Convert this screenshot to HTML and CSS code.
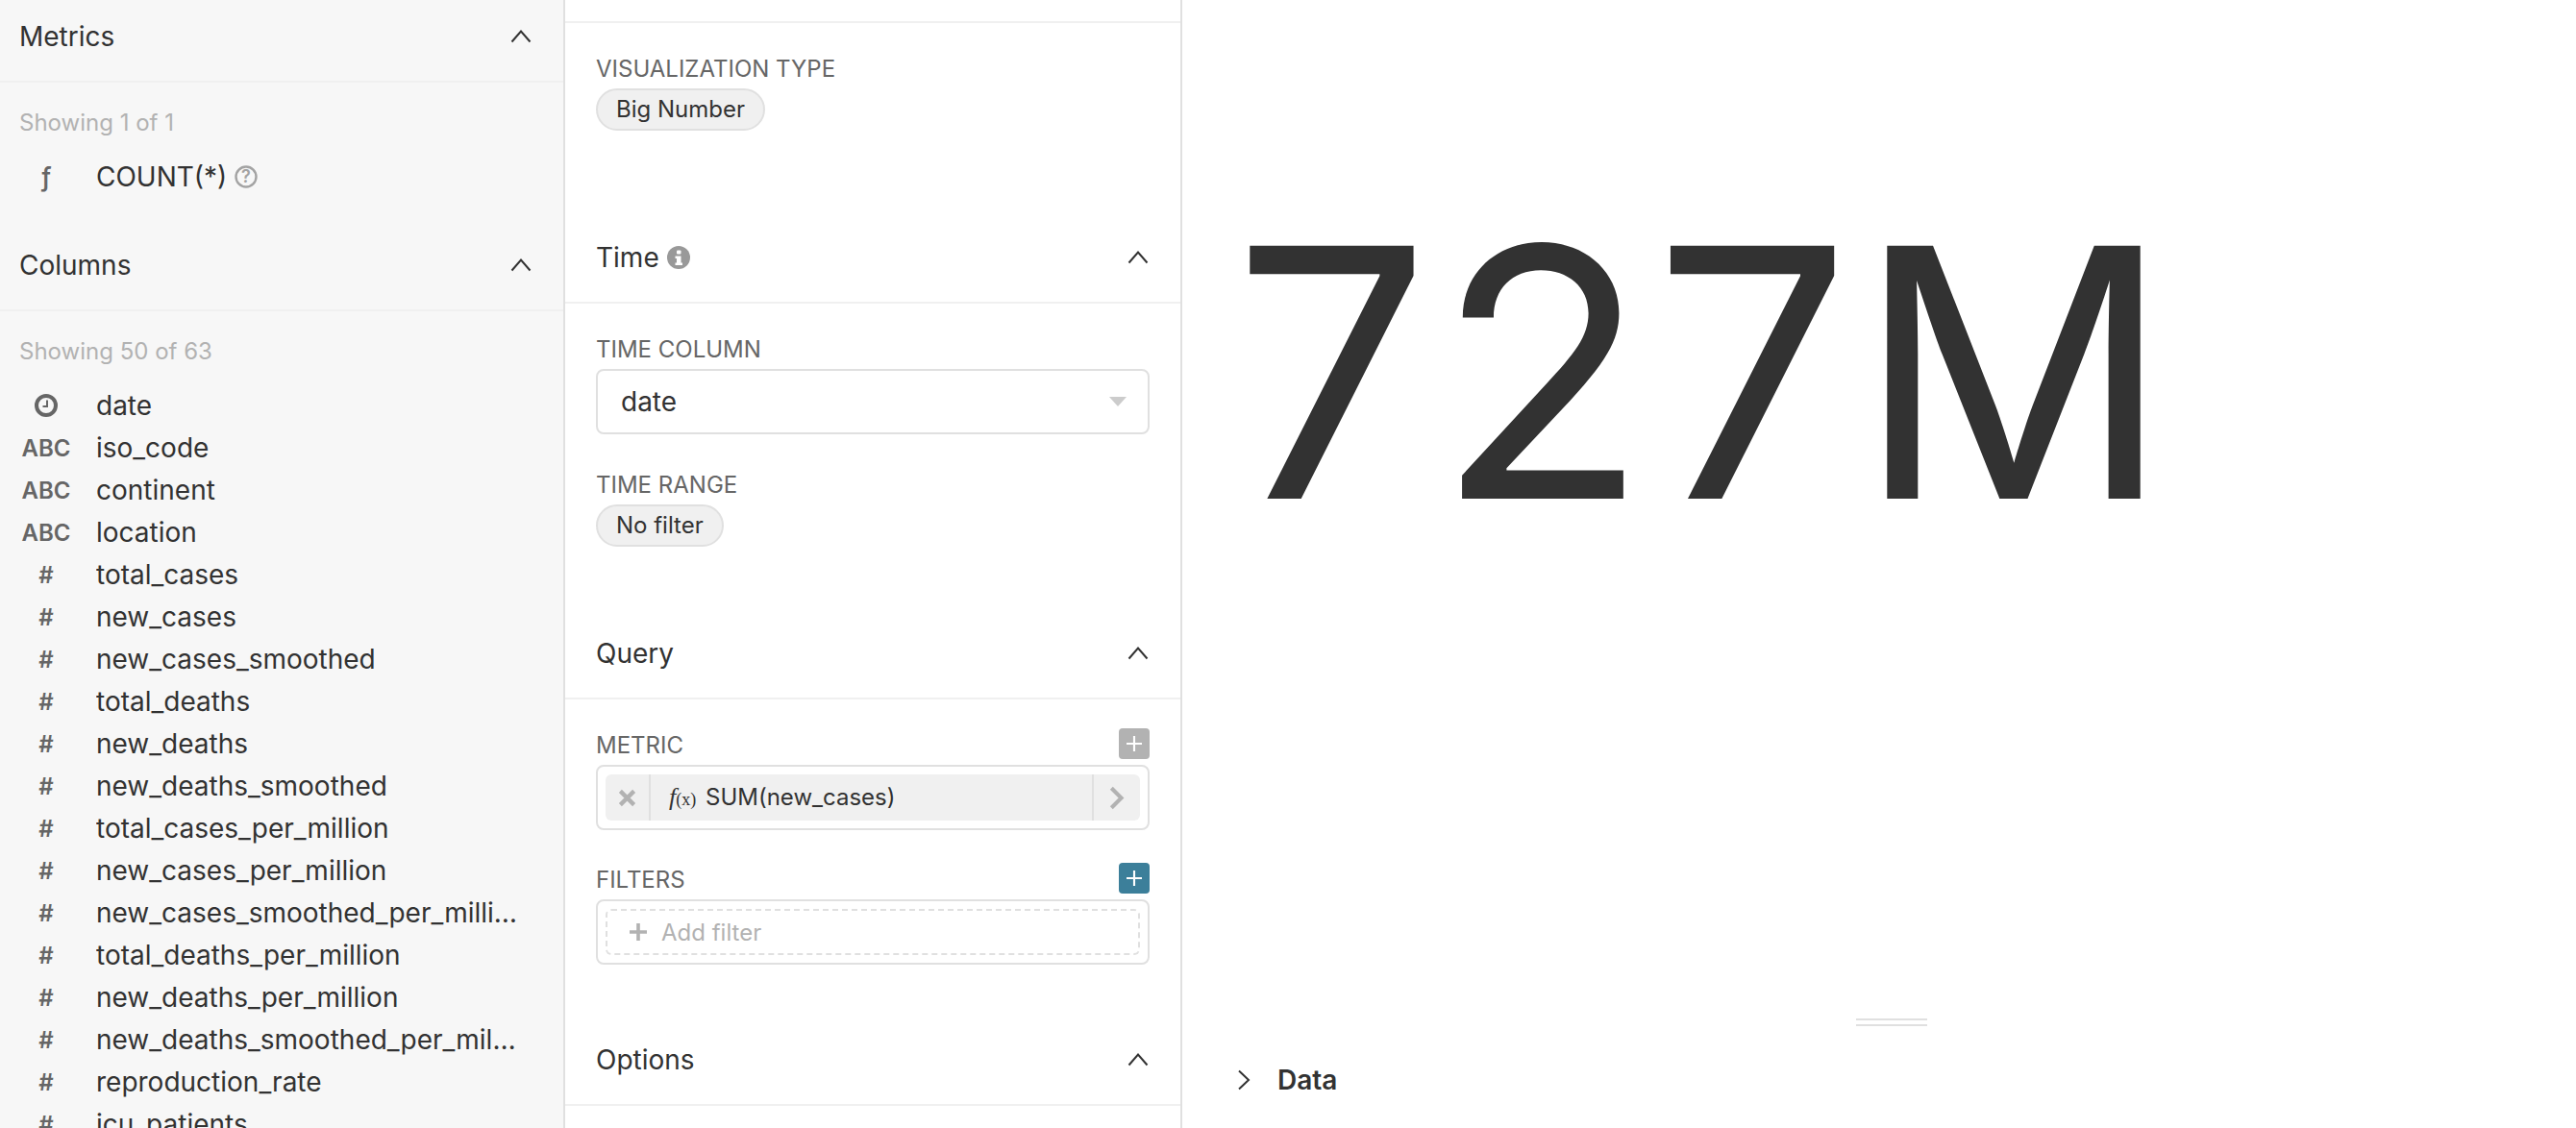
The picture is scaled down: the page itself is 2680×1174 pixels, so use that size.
FILE: index.html
```html
<!DOCTYPE html>
<html lang="en">
<head>
<meta charset="utf-8">
<title>Big Number chart</title>
<link rel="stylesheet" href="styles.css">
</head>
<body>
<svg class="defs" width="0" height="0" aria-hidden="true">
  <symbol id="chev-up" viewBox="0 0 24 24"><path d="M2.500 17.500 12 6.500l9.500 11" fill="none" stroke="currentColor" stroke-width="2"/></symbol>
  <symbol id="plus" viewBox="0 0 30 30"><path d="M15 7.500v15M7.500 15h15" fill="none" stroke="#fff" stroke-width="2"/></symbol>
</svg>
<div class="app">
  <aside class="datasource">
    <section class="ds-head">
      <span>Metrics</span>
      <svg class="chev"><use href="#chev-up"/></svg>
    </section>
    <div class="ds-count metrics-count">Showing 1 of 1</div>
    <div class="row metric-row">
      <span class="type func">ƒ</span>
      <span class="name">COUNT(*)</span>
      <svg class="help" viewBox="0 0 24 24"><circle cx="12" cy="12" r="10.500" fill="none" stroke="#a3a3a3" stroke-width="2.400"/><text x="12" y="18" text-anchor="middle" class="help-q">?</text></svg>
    </div>
    <section class="ds-head columns-head">
      <span>Columns</span>
      <svg class="chev"><use href="#chev-up"/></svg>
    </section>
    <div class="ds-count columns-count">Showing 50 of 63</div>
    <div class="rows">
      <div class="row"><span class="type"><svg class="clock" viewBox="0 0 24 24"><circle cx="12" cy="12" r="10" fill="none" stroke="#666" stroke-width="4"/><path d="M13 6.500v6.500H8.500" fill="none" stroke="#666" stroke-width="2"/></svg></span><span class="name">date</span></div>
      <div class="row"><span class="type">ABC</span><span class="name">iso_code</span></div>
      <div class="row"><span class="type">ABC</span><span class="name">continent</span></div>
      <div class="row"><span class="type">ABC</span><span class="name">location</span></div>
      <div class="row"><span class="type">#</span><span class="name">total_cases</span></div>
      <div class="row"><span class="type">#</span><span class="name">new_cases</span></div>
      <div class="row"><span class="type">#</span><span class="name">new_cases_smoothed</span></div>
      <div class="row"><span class="type">#</span><span class="name">total_deaths</span></div>
      <div class="row"><span class="type">#</span><span class="name">new_deaths</span></div>
      <div class="row"><span class="type">#</span><span class="name">new_deaths_smoothed</span></div>
      <div class="row"><span class="type">#</span><span class="name">total_cases_per_million</span></div>
      <div class="row"><span class="type">#</span><span class="name">new_cases_per_million</span></div>
      <div class="row"><span class="type">#</span><span class="name">new_cases_smoothed_per_million</span></div>
      <div class="row"><span class="type">#</span><span class="name">total_deaths_per_million</span></div>
      <div class="row"><span class="type">#</span><span class="name">new_deaths_per_million</span></div>
      <div class="row"><span class="type">#</span><span class="name">new_deaths_smoothed_per_million</span></div>
      <div class="row"><span class="type">#</span><span class="name">reproduction_rate</span></div>
      <div class="row"><span class="type">#</span><span class="name">icu_patients</span></div>
    </div>
  </aside>

  <main class="controls">
    <div class="tabs-strip"></div>
    <div class="group viz-group">
      <div class="label">VISUALIZATION TYPE</div>
      <span class="pill">Big Number</span>
    </div>
    <header class="sec-head">
      <span class="sec-title">Time <svg class="info" viewBox="0 0 24 24"><circle cx="12" cy="12" r="12" fill="#999"/><rect x="10" y="4.500" width="4.500" height="4" rx="1" fill="#fff"/><path d="M8.500 10.500h6v7h1.500v2.500H8.500v-2.500H10v-4.500H8.500z" fill="#fff"/></svg></span>
      <svg class="chev"><use href="#chev-up"/></svg>
    </header>
    <div class="group time-group">
      <div class="label">TIME COLUMN</div>
      <div class="select"><span>date</span><i class="caret"></i></div>
      <div class="label range-label">TIME RANGE</div>
      <span class="pill">No filter</span>
    </div>
    <header class="sec-head">
      <span class="sec-title">Query</span>
      <svg class="chev"><use href="#chev-up"/></svg>
    </header>
    <div class="group query-group">
      <div class="label-row">
        <div class="label">METRIC</div>
        <span class="add add-off"><svg viewBox="0 0 30 30"><use href="#plus"/></svg></span>
      </div>
      <div class="box">
        <div class="metric-tag">
          <span class="tag-x"><svg viewBox="0 0 16 16"><path d="M2 2l12 12M14 2L2 14" stroke="#b2b2b2" stroke-width="3.600" fill="none"/></svg></span>
          <span class="tag-main"><span class="fx"><em>f</em><small>(x)</small></span> SUM(new_cases)</span>
          <span class="tag-open"><svg viewBox="0 0 14 22"><path d="M2 2l9 9-9 9" stroke="#b2b2b2" stroke-width="3.600" fill="none"/></svg></span>
        </div>
      </div>
      <div class="label-row filters-row">
        <div class="label">FILTERS</div>
        <span class="add add-on"><svg viewBox="0 0 30 30"><use href="#plus"/></svg></span>
      </div>
      <div class="box">
        <div class="add-filter">
          <svg viewBox="0 0 20 20"><path d="M10 1v18M1 10h18" stroke="#b2b2b2" stroke-width="3.600" fill="none"/></svg>
          <span>Add filter</span>
        </div>
      </div>
    </div>
    <header class="sec-head">
      <span class="sec-title">Options</span>
      <svg class="chev"><use href="#chev-up"/></svg>
    </header>
  </main>

  <section class="chart">
    <div class="big-number">727M</div>
    <div class="handle"></div>
    <div class="data-bar">
      <svg viewBox="0 0 16 24"><path d="M3 2.500 13 12 3 21.500" fill="none" stroke="#323232" stroke-width="2"/></svg>
      <span>Data</span>
    </div>
  </section>
</div>
</body>
</html>
```

FILE: styles.css
```css
* { box-sizing: border-box; }
html, body { margin: 0; height: 100%; overflow: hidden; background: #fff; }
body { font-family: Inter, "Noto Sans", sans-serif; font-size: 28px; color: #323232; }
.defs { position: absolute; }
.app { display: flex; height: 1174px; overflow: hidden; }

/* Datasource column */
.datasource { flex: 0 0 588px; background: #f7f7f7; border-right: 2px solid #e0e0e0; overflow: hidden; }
.ds-head { height: 86px; padding: 0 32px 8px 20px; display: flex; align-items: center; justify-content: space-between; border-bottom: 2px solid #f0f0f0; }
.columns-head { height: 94px; padding-top: 9px; padding-bottom: 9px; }
.chev { width: 24px; height: 24px; color: #323232; flex: none; }
.ds-count { padding-left: 20px; height: 84px; line-height: 84px; font-size: 24px; color: #b2b2b2; white-space: nowrap; }
.metrics-count { margin-bottom: -14px; }
.columns-count { margin-bottom: -8px; }
.row { display: flex; align-items: center; height: 44px; padding-left: 20px; }
.metric-row { height: 56px; margin-bottom: 18px; }
.type { flex: 0 0 56px; text-align: center; font-size: 24px; font-weight: 600; color: #666; margin-right: 24px; display: flex; justify-content: center; align-items: center; }
.func { font-size: 28px; font-weight: 500; }
.name { max-width: 442px; overflow: hidden; text-overflow: ellipsis; white-space: nowrap; }
.help { width: 24px; height: 24px; margin-left: 8px; flex: none; }
.help-q { font-size: 18px; font-weight: 600; fill: #a3a3a3; }
.clock { width: 24px; height: 24px; }

/* Controls column */
.controls { flex: 0 0 642px; border-right: 2px solid #e0e0e0; overflow: hidden; }
.tabs-strip { height: 24px; border-bottom: 2px solid #f0f0f0; }
.group { padding: 0 32px; }
.viz-group { height: 198px; padding-top: 34px; }
.label { font-size: 24px; line-height: 28px; color: #666; }
.pill { display: inline-block; height: 44px; line-height: 40px; padding: 0 19px; border: 2px solid #e0e0e0; border-radius: 22px; background: #f0f0f0; font-size: 24px; margin-top: 6px; }
.sec-head { height: 94px; padding: 0 32px; display: flex; align-items: center; justify-content: space-between; border-bottom: 2px solid #f0f0f0; }
.sec-title { display: inline-flex; align-items: center; gap: 8px; }
.info { width: 24px; height: 24px; }
.time-group { height: 318px; padding-top: 34px; }
.select { height: 68px; margin-top: 6px; padding: 0 24px; display: flex; align-items: center; justify-content: space-between; border: 2px solid #e0e0e0; border-radius: 8px; }
.caret { width: 0; height: 0; border: 9px solid transparent; border-top: 10px solid #ccc; border-bottom: 0; margin-right: -2px; }
.range-label { margin-top: 39px; }
.query-group { height: 329px; padding-top: 30px; }
.label-row { display: flex; justify-content: space-between; align-items: center; height: 32px; }
.label-row .label { position: relative; top: 2px; }
.filters-row { margin-top: 34px; }
.add { width: 32px; height: 32px; border-radius: 4px; display: block; }
.add svg { display: block; width: 32px; height: 32px; }
.add-off { background: #b2b2b2; }
.add-on { background: #3c7f9a; }
.box { height: 68px; margin-top: 6px; padding: 8px; border: 2px solid #e0e0e0; border-radius: 8px; }
.metric-tag { height: 48px; display: flex; align-items: center; background: #f0f0f0; border-radius: 6px; font-size: 24px; }
.tag-x { flex: 0 0 47px; height: 100%; border-right: 2px solid #e0e0e0; display: flex; align-items: center; justify-content: center; }
.tag-x svg { width: 19px; height: 19px; }
.tag-main { flex: 1; padding-left: 19px; white-space: nowrap; }
.fx { font-family: "Liberation Serif", serif; margin-right: 3px; }
.fx em { font-size: 26px; }
.fx small { font-size: 18px; }
.tag-open { flex: 0 0 50px; height: 100%; border-left: 2px solid #e0e0e0; display: flex; align-items: center; justify-content: center; }
.tag-open svg { width: 16px; height: 25px; }
.add-filter { height: 48px; display: flex; align-items: center; gap: 14px; padding-left: 22px; border: 2px dashed #e0e0e0; border-radius: 6px; color: #b2b2b2; font-size: 24px; }
.add-filter svg { width: 20px; height: 20px; }

/* Chart column */
.chart { flex: 1; min-width: 0; padding-left: 56px; display: flex; flex-direction: column; }
.big-number { font-size: 362px; letter-spacing: 6px; line-height: 456px; height: 1024px; padding-top: 159px; color: #323232; white-space: nowrap; margin-left: -3px; }
.handle { width: 74px; height: 8px; margin: 36px 0 0 645px; border-top: 2px solid #e0e0e0; border-bottom: 2px solid #e0e0e0; }
.data-bar { display: flex; align-items: center; gap: 27px; margin-top: 38px; font-weight: 600; height: 36px; }
.data-bar svg { width: 16px; height: 24px; }
```
